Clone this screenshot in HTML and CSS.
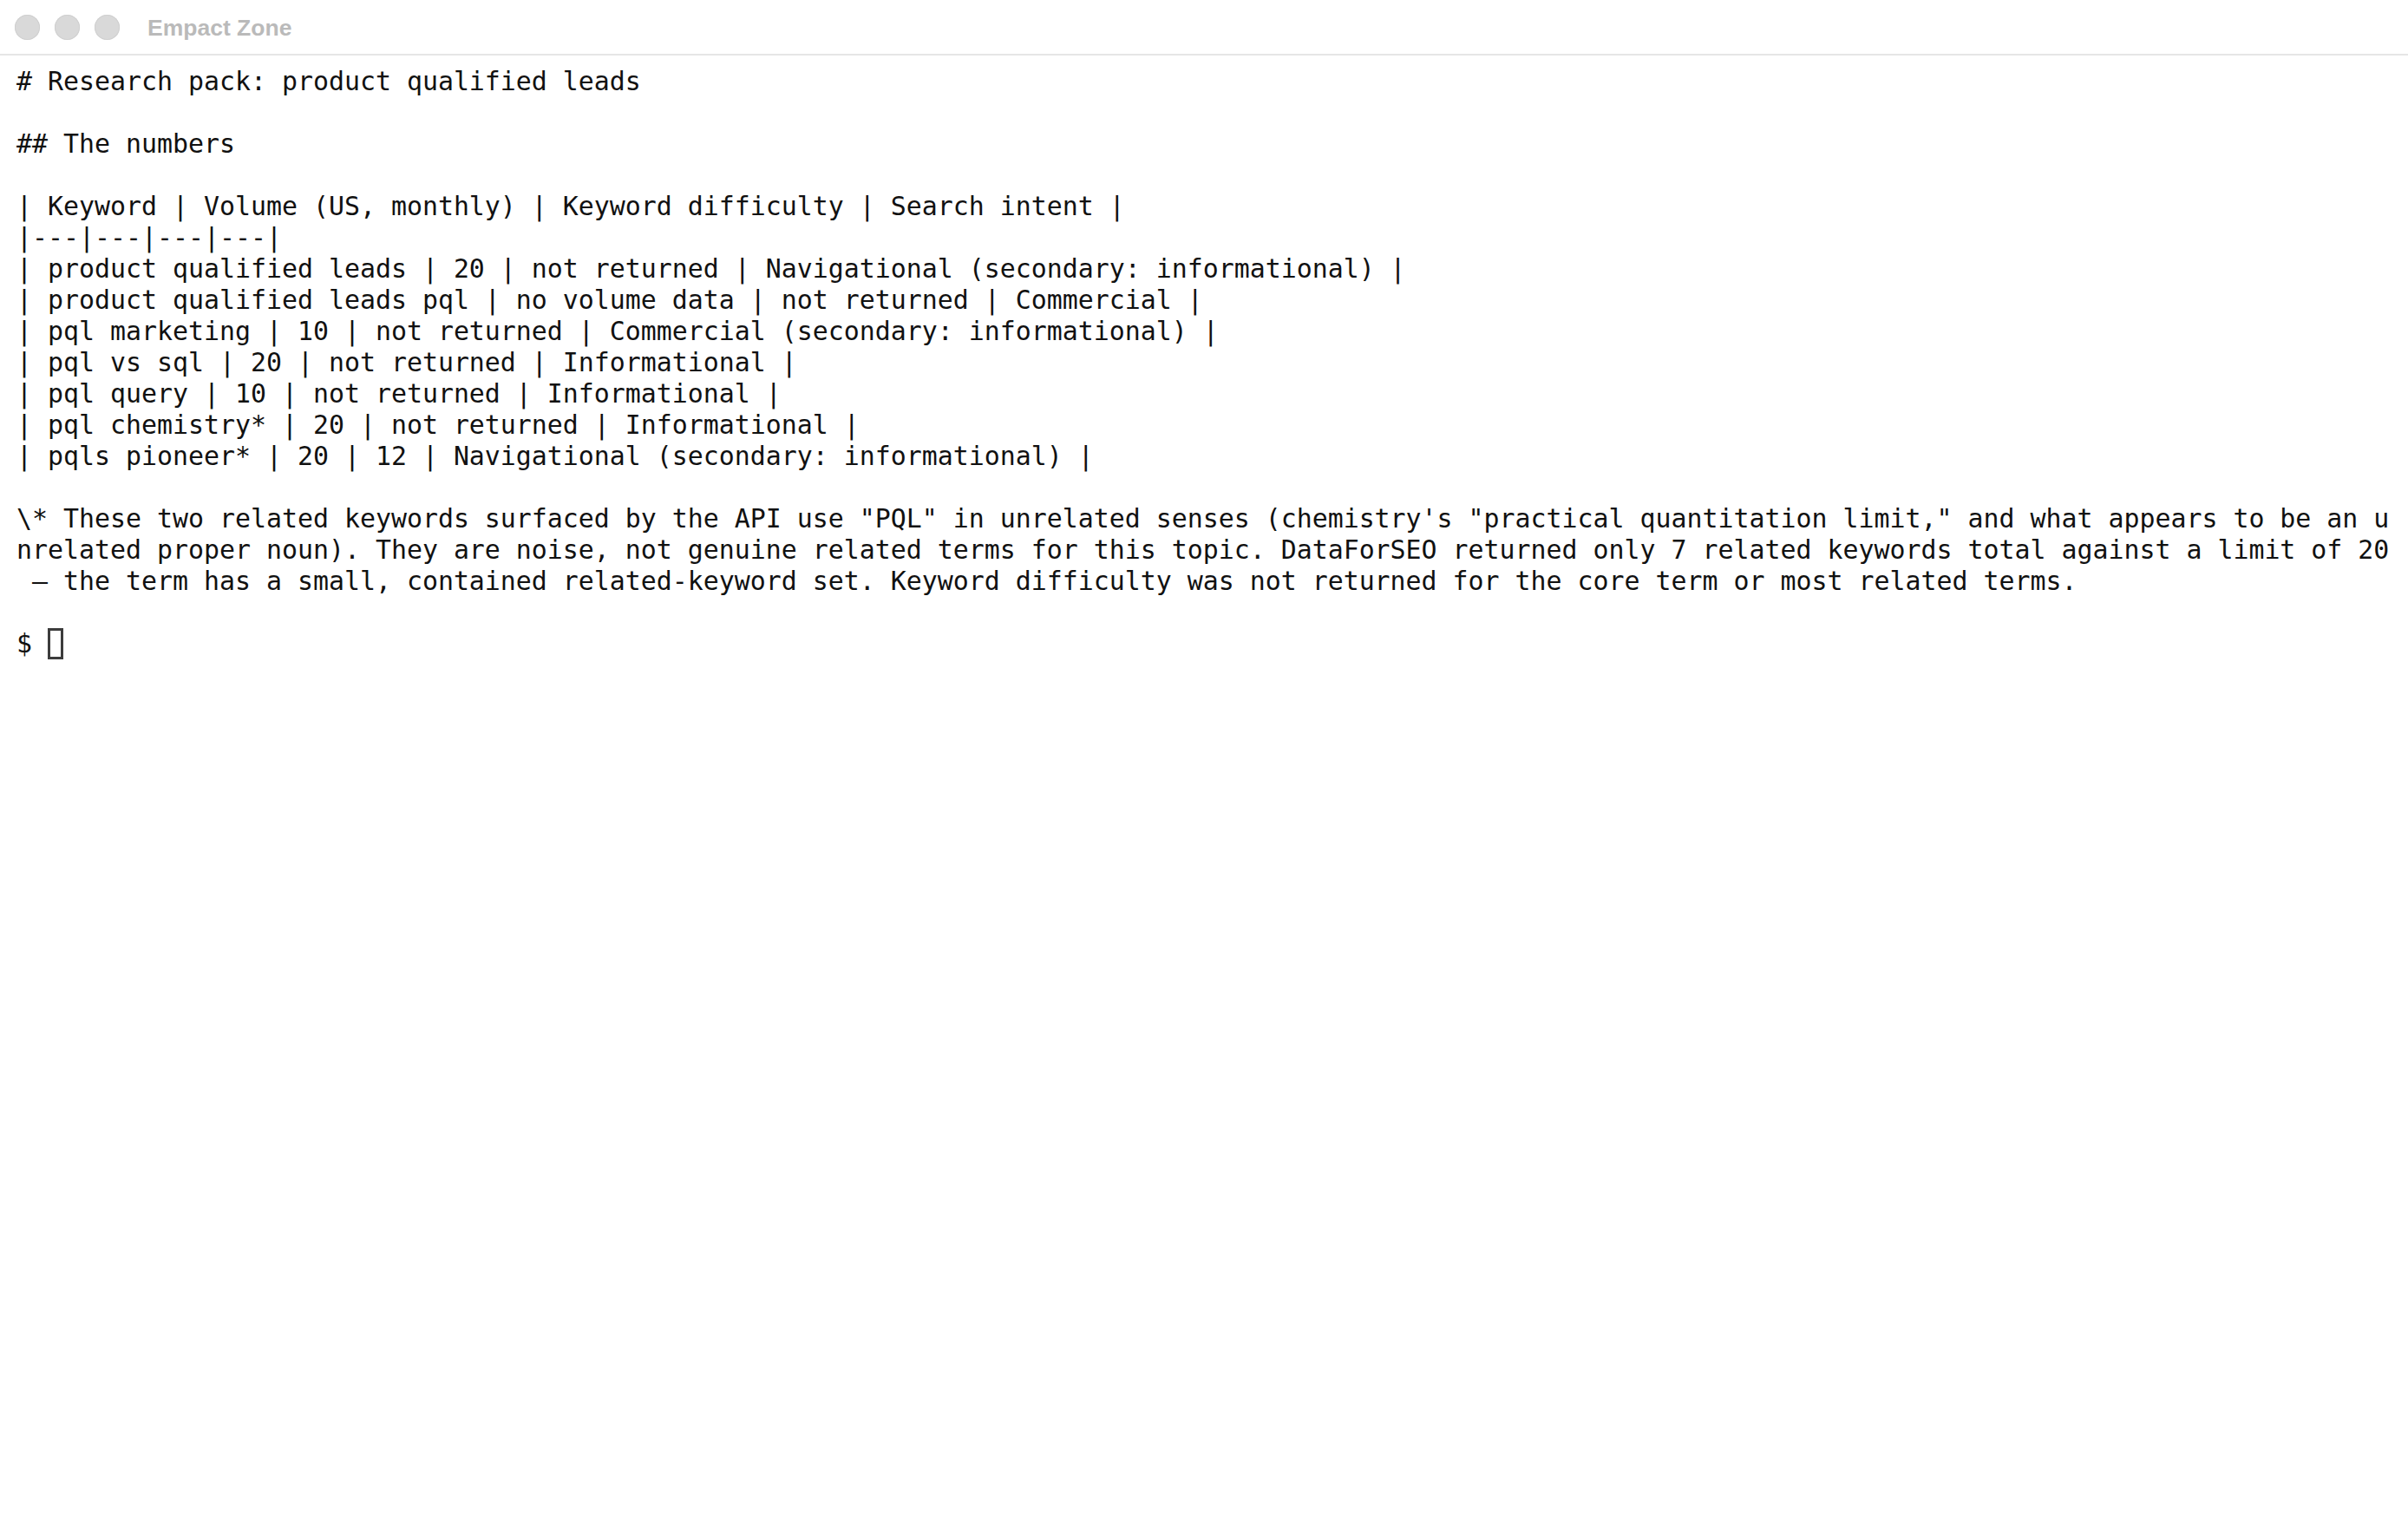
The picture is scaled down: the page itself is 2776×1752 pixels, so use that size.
FILE: index.html
```html
<!DOCTYPE html>
<html lang="en">
<head>
<meta charset="utf-8">
<title>Empact Zone</title>
<link rel="stylesheet" href="styles.css">
</head>
<body>
<div class="window">
  <header class="titlebar">
    <div class="lights">
      <span class="light"></span>
      <span class="light"></span>
      <span class="light"></span>
    </div>
    <div class="title">Empact Zone</div>
  </header>
  <pre class="terminal"># Research pack: product qualified leads

## The numbers

| Keyword | Volume (US, monthly) | Keyword difficulty | Search intent |
|---|---|---|---|
| product qualified leads | 20 | not returned | Navigational (secondary: informational) |
| product qualified leads pql | no volume data | not returned | Commercial |
| pql marketing | 10 | not returned | Commercial (secondary: informational) |
| pql vs sql | 20 | not returned | Informational |
| pql query | 10 | not returned | Informational |
| pql chemistry* | 20 | not returned | Informational |
| pqls pioneer* | 20 | 12 | Navigational (secondary: informational) |

\* These two related keywords surfaced by the API use "PQL" in unrelated senses (chemistry's "practical quantitation limit," and what appears to be an u
nrelated proper noun). They are noise, not genuine related terms for this topic. DataForSEO returned only 7 related keywords total against a limit of 20
 — the term has a small, contained related-keyword set. Keyword difficulty was not returned for the core term or most related terms.

$ <span class="cursor"></span></pre>
</div>
</body>
</html>
```

FILE: styles.css
```css
html, body {
  margin: 0;
  padding: 0;
  background: #ffffff;
}

.window {
  display: flex;
  flex-direction: column;
  min-height: 100vh;
}

.titlebar {
  display: flex;
  align-items: center;
  height: 62px;
  padding-left: 17px;
  border-bottom: 2px solid #e6e6e6;
  box-sizing: content-box;
}

.lights {
  display: flex;
  gap: 17px;
}

.light {
  width: 29px;
  height: 29px;
  border-radius: 50%;
  background: #d9d9d9;
  box-shadow: inset 0 0 0 1px #d0d0d0;
}

.title {
  margin-left: 32px;
  padding-top: 3px;
  font-family: "Liberation Sans", Arial, sans-serif;
  font-weight: bold;
  font-size: 26.5px;
  color: #bababa;
}

.terminal {
  margin: 0;
  padding: 12px 19px;
  font-family: "DejaVu Sans Mono", monospace;
  font-size: 29.9px;
  line-height: 36px;
  color: #111111;
  white-space: pre;
}

.cursor {
  display: inline-block;
  width: 18px;
  height: 36px;
  box-sizing: border-box;
  border: 3px solid #3c3c3c;
  vertical-align: top;
}
```
